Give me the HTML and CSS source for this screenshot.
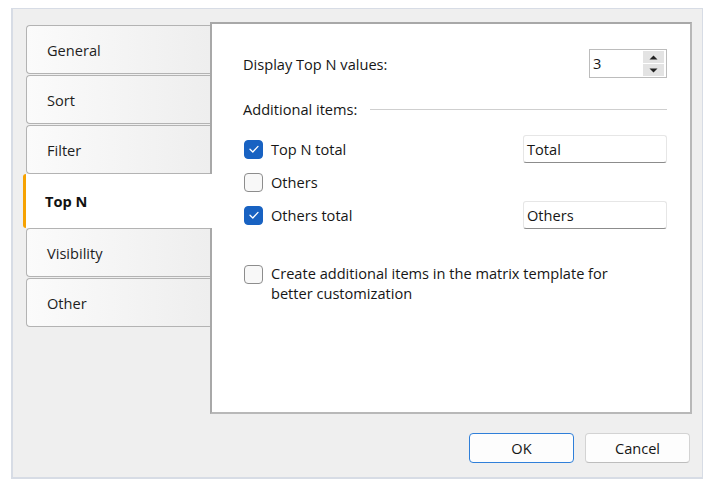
FILE: index.html
```html
<!DOCTYPE html>
<html>
<head>
<meta charset="utf-8">
<link rel="stylesheet" href="styles.css">
</head>
<body>
<div class="dialog">
  <div class="main">
    <div class="tabs">
      <div class="tab">General</div>
      <div class="tab">Sort</div>
      <div class="tab">Filter</div>
      <div class="tab active">Top N</div>
      <div class="tab">Visibility</div>
      <div class="tab">Other</div>
    </div>
    <div class="panel">
      <div class="row-top">
        <span class="label">Display Top N values:</span>
        <div class="spin">
          <span class="spin-val">3</span>
          <div class="spin-btns">
            <div class="spin-btn"><svg width="9" height="5" viewBox="0 0 9 5"><path d="M0.5 4.5 L4.5 0.5 L8.5 4.5 Z" fill="#222"/></svg></div>
            <div class="spin-btn"><svg width="9" height="5" viewBox="0 0 9 5"><path d="M0.5 0.5 L4.5 4.5 L8.5 0.5 Z" fill="#222"/></svg></div>
          </div>
        </div>
      </div>
      <div class="group">
        <span class="label">Additional items:</span>
        <span class="sep"></span>
      </div>
      <div class="items">
        <div class="item">
          <span class="cb checked"><svg width="12" height="10" viewBox="0 0 12 10"><path d="M2 5.2 L4.8 8 L10 2.4" fill="none" stroke="#fff" stroke-width="1.3" stroke-linecap="round" stroke-linejoin="round"/></svg></span>
          <span class="label">Top N total</span>
          <span class="field">Total</span>
        </div>
        <div class="item">
          <span class="cb"></span>
          <span class="label">Others</span>
        </div>
        <div class="item">
          <span class="cb checked"><svg width="12" height="10" viewBox="0 0 12 10"><path d="M2 5.2 L4.8 8 L10 2.4" fill="none" stroke="#fff" stroke-width="1.3" stroke-linecap="round" stroke-linejoin="round"/></svg></span>
          <span class="label">Others total</span>
          <span class="field">Others</span>
        </div>
      </div>
      <div class="create">
        <span class="cb"></span>
        <span class="label multi">Create additional items in the matrix template for<br>better customization</span>
      </div>
    </div>
  </div>
  <div class="buttons">
    <button class="btn default">OK</button>
    <button class="btn">Cancel</button>
  </div>
</div>
</body>
</html>
```
FILE: styles.css
```css
* { box-sizing: border-box; }
html, body {
  margin: 0;
  padding: 0;
  background: #ffffff;
}
body {
  font-family: "Open Sans", "Noto Sans", sans-serif;
  font-size: 14.6px;
  color: #161616;
}
.dialog {
  margin: 8px 0 0 11px;
  width: 692px;
  height: 471px;
  background: #efefef;
  border: 1px solid #d7dce5;
  border-width: 1px 1px 2px 2px;
  display: flex;
  flex-direction: column;
}
.main {
  display: flex;
  padding-top: 13px;
}
.tabs {
  display: flex;
  flex-direction: column;
  width: 187px;
  margin-left: 10px;
  padding-top: 3px;
  gap: 1px;
}
.tab {
  height: 49px;
  margin-left: 3px;
  display: flex;
  align-items: center;
  padding-left: 20px;
  border: 1px solid #b3b3b3;
  border-right: none;
  border-radius: 4px 0 0 4px;
  background: linear-gradient(to right, #fbfbfb, #eeeeee);
  color: #1e1e1e;
}
.tab.active {
  position: relative;
  z-index: 2;
  height: 54px;
  margin: -1px -2px -1px 0;
  border: none;
  border-left: 3px solid #f6a202;
  border-radius: 3px 0 0 3px;
  background: #ffffff;
  padding-left: 19px;
  font-weight: 700;
  color: #111;
}
.panel {
  width: 482px;
  height: 392px;
  background: #ffffff;
  border: 2px solid #b0b0b0;
  border-color: #a8a8a8 #b8b8b8 #b8b8b8 #a8a8a8;
  padding: 25px 23px 0 31px;
  display: flex;
  flex-direction: column;
}
.row-top {
  display: flex;
  align-items: center;
  justify-content: space-between;
  height: 29px;
}
.spin {
  width: 78px;
  height: 29px;
  border: 1px solid #bcbcbc;
  display: flex;
  align-items: center;
  padding: 1px;
}
.spin-val {
  flex: 1;
  padding-left: 2px;
  line-height: 25px;
}
.spin-btns {
  width: 21px;
  height: 25px;
  display: flex;
  flex-direction: column;
  gap: 1px;
  margin-right: 1px;
}
.spin-btn {
  flex: 1;
  background: #e3e3e3;
  display: flex;
  align-items: center;
  justify-content: center;
}
.group {
  display: flex;
  align-items: center;
  height: 20px;
  margin-top: 21px;
}
.sep {
  flex: 1;
  height: 1px;
  background: #cfcfcf;
  margin-left: 13px;
}
.items {
  display: flex;
  flex-direction: column;
  gap: 5px;
  margin-top: 16px;
}
.item {
  display: flex;
  align-items: center;
  height: 28px;
}
.cb {
  width: 19px;
  height: 19px;
  margin-left: 1px;
  margin-right: 8px;
  border: 1px solid #8d8d8d;
  border-radius: 4px;
  background: #f8f8f8;
  display: inline-flex;
  align-items: center;
  justify-content: center;
  flex: none;
}
.cb.checked {
  background: #1862c2;
  border-color: #1862c2;
}
.field {
  margin-left: auto;
  width: 144px;
  height: 28px;
  border: 1px solid #e6e6e6;
  border-bottom-color: #8c8c8c;
  border-radius: 3px;
  background: #fff;
  padding-left: 3px;
  display: flex;
  align-items: center;
  color: #161616;
}
.create {
  display: flex;
  align-items: flex-start;
  margin-top: 34px;
}
.create .cb {
  margin-top: 2px;
}
.multi {
  line-height: 20px;
}
.buttons {
  display: flex;
  justify-content: flex-end;
  gap: 11px;
  margin-top: 19px;
  padding-right: 12px;
}
.btn {
  font-family: inherit;
  font-size: 14.6px;
  color: #161616;
  width: 105px;
  height: 30px;
  background: #fdfdfd;
  border: 1px solid #d3d3d3;
  border-bottom-color: #bdbdbd;
  border-radius: 4px;
  padding: 0;
}
.btn.default {
  border: 1px solid #2f7fd9;
}
```
